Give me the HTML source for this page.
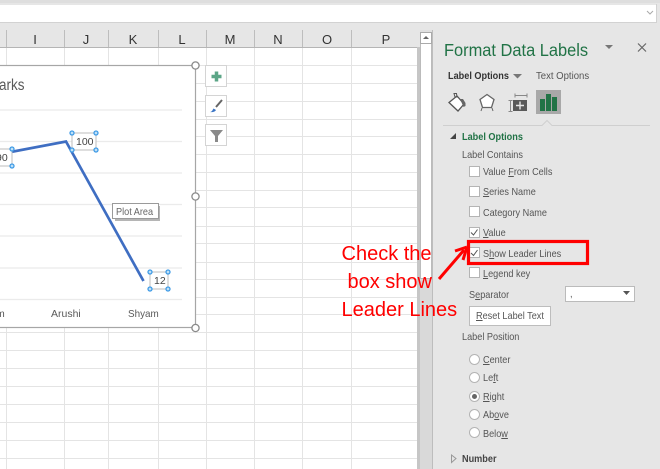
<!DOCTYPE html>
<html>
<head>
<meta charset="utf-8">
<style>
html,body{margin:0;padding:0;width:660px;height:469px;overflow:hidden;background:#fff}
body{position:relative;font-family:"Liberation Sans",sans-serif;color:#444}
.a{position:absolute}
.t{position:absolute;white-space:nowrap;font-size:10.5px;color:#555;line-height:12px;transform:scaleX(.87);transform-origin:left center}
.n{transform:none}
.cb{position:absolute;left:469px;width:9px;height:9px;background:#fff;border:1px solid #b4b4b4}
.rb{position:absolute;left:469px;width:9px;height:9px;background:#fff;border:1px solid #b4b4b4;border-radius:50%}
.col{position:absolute;top:33px;font-size:13px;color:#333;line-height:14px;transform:translateX(-50%)}
.s{position:absolute;width:20px;height:20px;left:205px;background:#fff;border:1px solid #d4d4d4;box-sizing:content-box}
.r{position:absolute;color:#f00;font-size:20px;line-height:24px;white-space:nowrap;z-index:5}
u{text-decoration-thickness:1px;text-underline-offset:1px}
</style>
</head>
<body>
<!-- base sheet -->
<svg class="a" style="left:0;top:0" width="660" height="469">
<rect width="660" height="469" fill="#fff"/>
<g stroke="#e4e4e4" stroke-width="1">
<path d="M0 65.5H418M0 83.5H418M0 101.5H418M0 119.5H418M0 136.5H418M0 154.5H418M0 172.5H418M0 190.5H418M0 207.5H418M0 226.5H418M0 243.5H418M0 262.5H418M0 279.5H418M0 297.5H418M0 314.5H418M0 332.5H418M0 350.5H418M0 368.5H418M0 386.5H418M0 404.5H418M0 422.5H418M0 440.5H418M0 458.5H418"/>
<path d="M6.5 48V469M64.5 48V469M108.5 48V469M158.5 48V469M206.5 48V469M254.5 48V469M302.5 48V469M351.5 48V469"/>
</g>
<!-- top chrome -->
<rect x="0" y="0" width="660" height="48" fill="#e6e6e6"/>
<rect x="0" y="0" width="660" height="3" fill="#dedede"/>
<rect x="0" y="47" width="418" height="1" fill="#b5b5b5"/>
<path d="M6.5 30V47M64.5 30V47M108.5 30V47M158.5 30V47M206.5 30V47M254.5 30V47M302.5 30V47M351.5 30V47" stroke="#bdbdbd"/>
<!-- sheet right edge & scrollbar -->
<rect x="417" y="47" width="3" height="422" fill="#c6c6c6"/>
<rect x="420" y="30" width="13" height="439" fill="#e0e0e0"/>
<rect x="420.500" y="32.500" width="11" height="246" fill="#fff" stroke="#bbb"/>
<rect x="420.500" y="32.500" width="11" height="11" fill="#fff" stroke="#aaa"/>
<path d="M423 39h6l-3-3z" fill="#666"/>
<rect x="420" y="279" width="13" height="190" fill="#d9d9d9"/>
<!-- panel -->
<rect x="433" y="23" width="227" height="446" fill="#e6e6e6"/>
<rect x="0" y="5" width="656" height="17" fill="#fff"/>
<path d="M0 22.500H657M656.500 4V23" stroke="#d2d2d2"/>
<path d="M647 11l3 3 3-3" fill="none" stroke="#aaa"/>
<rect x="432" y="30" width="1" height="439" fill="#bdbdbd"/>
<!-- chart -->
<rect x="-2.500" y="65.500" width="198" height="262" fill="#fff" stroke="#a6a6a6" stroke-width="1.200"/>
<path d="M0 110H182M0 141.500H182M0 173H182M0 204.500H182M0 236H182M0 268H182M0 299.500H182" stroke="#ebebeb" stroke-width="1.200"/>
<path d="M0 154L66 141.500L143.500 281" fill="none" stroke="#3f6ec2" stroke-width="2.700"/>
<!-- chart handles -->
<circle cx="195.500" cy="65.500" r="3.600" fill="#fff" stroke="#8a8a8a" stroke-width="1.300"/>
<circle cx="195.500" cy="196.500" r="3.600" fill="#fff" stroke="#8a8a8a" stroke-width="1.300"/>
<circle cx="195.500" cy="328" r="3.600" fill="#fff" stroke="#8a8a8a" stroke-width="1.300"/>
<!-- label boxes -->
<g fill="#fff" stroke="#bcbcbc">
<rect x="72" y="133" width="24" height="17"/>
<rect x="150" y="272" width="18" height="17"/>
<rect x="-4" y="149" width="16" height="17"/>
</g>
<g fill="#bfe0f7" stroke="#3f9be6" stroke-width="1.300">
<circle cx="72" cy="133" r="2"/><circle cx="96" cy="133" r="2"/><circle cx="72" cy="150" r="2"/><circle cx="96" cy="150" r="2"/>
<circle cx="150" cy="272" r="2"/><circle cx="168" cy="272" r="2"/><circle cx="150" cy="289" r="2"/><circle cx="168" cy="289" r="2"/>
<circle cx="12" cy="149" r="2"/><circle cx="12" cy="166" r="2"/>
</g>
<!-- tooltip -->
<rect x="115" y="206" width="45" height="15" fill="#b5b5b5"/>
<rect x="112.500" y="203.500" width="46" height="15" fill="#fff" stroke="#9a9a9a"/>
<!-- panel tab separator -->
<path d="M443 125.500H542L547 120.500L552 125.500H650" fill="none" stroke="#cfcfcf"/>
</svg>

<!-- col headers -->
<div class="col" style="left:35px">I</div>
<div class="col" style="left:86px">J</div>
<div class="col" style="left:133px">K</div>
<div class="col" style="left:182px">L</div>
<div class="col" style="left:230px">M</div>
<div class="col" style="left:278px">N</div>
<div class="col" style="left:327px">O</div>
<div class="col" style="left:386px">P</div>

<!-- chart text -->
<div class="t" style="left:-1px;top:77px;font-size:15.500px;line-height:18px;color:#595959">arks</div>
<div class="t n" style="left:76px;top:136px;font-size:10.500px;color:#444">100</div>
<div class="t n" style="left:154px;top:275px;font-size:10.500px;color:#444">12</div>
<div class="t n" style="left:-4px;top:152px;font-size:10.500px;color:#444">90</div>
<div class="t n" style="left:-4px;top:308px;color:#595959">m</div>
<div class="t n" style="left:51px;top:308px;font-size:10.500px;color:#595959">Arushi</div>
<div class="t" style="left:128px;top:308px;font-size:10.500px;color:#595959;transform:scaleX(.94)">Shyam</div>
<div class="t" style="left:115.500px;top:205.500px;font-size:10.500px;color:#666">Plot Area</div>

<!-- side buttons -->
<div class="s" style="top:65px"><svg width="20" height="20"><path d="M10.500 5.500v10M5.500 10.500h10" stroke="#5ca687" stroke-width="3.500"/></svg></div>
<div class="s" style="top:95px"><svg width="20" height="20"><path d="M10 11L16 4" stroke="#666" stroke-width="2"/><path d="M4 16c2 0 2.500-2 3.500-3.500L10 14c-1 2-4 2.500-6 2z" fill="#3a74c4"/></svg></div>
<div class="s" style="top:124px"><svg width="20" height="20"><path d="M4 5h13l-5 6v6h-3v-6z" fill="#8a8a8a"/></svg></div>

<!-- Panel header -->
<div class="t" style="left:443.500px;top:39.500px;font-size:17.200px;line-height:20px;color:#217346;transform:scaleX(.955)">Format Data Labels</div>
<svg class="a" style="left:600px;top:40px" width="50" height="16"><path d="M5 5h8l-4 4z" fill="#777"/><path d="M38 3.500l8 8M46 3.500l-8 8" stroke="#666" stroke-width="1.200"/></svg>
<div class="t" style="left:447.500px;top:69.500px;font-weight:bold;color:#333">Label Options</div>
<svg class="a" style="left:511px;top:70px" width="14" height="12"><path d="M2 4h9l-4.500 4.500z" fill="#777"/></svg>
<div class="t" style="left:535.500px;top:69.500px;color:#555;transform:scaleX(.91)">Text Options</div>

<!-- tab icons -->
<svg class="a" style="left:445px;top:90px" width="120" height="30">
<path d="M4 12.500L12 6l7 8-6 7z" fill="#fff" stroke="#555" stroke-width="1.300"/>
<path d="M10 7L9 3.500h2.500L12 7z" fill="none" stroke="#555"/>
<path d="M15 9h3l2.500 4v3l-2 1z" fill="#666"/>
<path d="M42 4.500l7 5-2.500 8h-9l-2.500-8z" fill="#fff" stroke="#666" stroke-width="1.300"/>
<path d="M37 18l-1 3M47 18l1 3" stroke="#666"/>
<path d="M65.500 10.500v11M63.500 10.500h4M63.500 21.500h4" stroke="#888" fill="none"/>
<path d="M70 5.500h12M70 3.500v4M82 3.500v4" stroke="#888" fill="none"/>
<rect x="68" y="10" width="14" height="11" fill="#595959"/>
<path d="M75 11.500v8M71 15.500h8" stroke="#e6e6e6" stroke-width="1.400"/>
<rect x="91" y="0" width="25" height="24" fill="#a8a8a8"/>
<rect x="95" y="9" width="5" height="12" fill="#217346"/><rect x="101" y="4" width="5" height="17" fill="#217346"/><rect x="107" y="7" width="5" height="14" fill="#217346"/>
</svg>

<!-- Label options -->
<svg class="a" style="left:449px;top:132px" width="10" height="10"><path d="M1 7h6V1z" fill="#444"/></svg>
<div class="t" style="left:461.500px;top:131px;font-weight:bold;color:#217346">Label Options</div>
<div class="t" style="left:461.500px;top:148.500px">Label Contains</div>

<div class="cb" style="top:166px"></div><div class="t" style="left:483px;top:165.500px">Value <u>F</u>rom Cells</div>
<div class="cb" style="top:186px"></div><div class="t" style="left:483px;top:186px"><u>S</u>eries Name</div>
<div class="cb" style="top:206px"></div><div class="t" style="left:483px;top:206.500px">Cate<u>g</u>ory Name</div>
<div class="cb" style="top:227px"></div><div class="t" style="left:483px;top:227px"><u>V</u>alue</div>
<div class="cb" style="top:247px"></div><div class="t" style="left:483px;top:247.500px">S<u>h</u>ow Leader Lines</div>
<div class="cb" style="top:267px"></div><div class="t" style="left:483px;top:268px"><u>L</u>egend key</div>
<svg class="a" style="left:469px;top:227px;z-index:2" width="11" height="32"><path d="M2 5.500l2.500 2.500L8.500 2.500M2 26l2.500 2.500L8.500 23" fill="none" stroke="#555" stroke-width="1"/></svg>

<div class="t" style="left:469px;top:288.500px">S<u>e</u>parator</div>
<div class="a" style="left:565px;top:286px;width:68px;height:14px;background:#fff;border:1px solid #bbb"></div>
<div class="t" style="left:570px;top:288px">,</div>
<svg class="a" style="left:622px;top:289px" width="10" height="8"><path d="M1 2h7L4.500 6z" fill="#555"/></svg>
<div class="a" style="left:469px;top:306px;width:80px;height:18px;background:#fff;border:1px solid #bdbdbd"></div>
<div class="t" style="left:476px;top:310px"><u>R</u>eset Label Text</div>
<div class="t" style="left:461.500px;top:331px">Label Position</div>

<div class="rb" style="top:354px"></div><div class="t" style="left:483px;top:354px"><u>C</u>enter</div>
<div class="rb" style="top:372px"></div><div class="t" style="left:483px;top:372px">Le<u>f</u>t</div>
<div class="rb" style="top:391px"></div><div class="t" style="left:483px;top:391px"><u>R</u>ight</div>
<div class="a" style="left:472px;top:394px;width:5px;height:5px;border-radius:50%;background:#666"></div>
<div class="rb" style="top:409px"></div><div class="t" style="left:483px;top:409px">Ab<u>o</u>ve</div>
<div class="rb" style="top:427px"></div><div class="t" style="left:483px;top:427.500px">Belo<u>w</u></div>

<svg class="a" style="left:450px;top:454px" width="10" height="12"><path d="M1.500 1L6 4.500L1.500 8.500z" fill="none" stroke="#999"/></svg>
<div class="t" style="left:461.500px;top:453px;font-weight:bold;color:#444">Number</div>

<!-- annotation -->
<div class="r" style="left:341.500px;top:242px">Check the</div>
<div class="r" style="left:347.500px;top:270px">box show</div>
<div class="r" style="left:341.500px;top:298px">Leader Lines</div>
<svg class="a" style="left:430px;top:235px;z-index:6" width="165" height="50">
<rect x="38.500" y="6.500" width="119" height="22" fill="none" stroke="#f00" stroke-width="3.200"/>
<path d="M9 44L34 15" stroke="#f00" stroke-width="3"/>
<path d="M37 12L25 16M37 12L33 25" stroke="#f00" stroke-width="3" fill="none"/>
</svg>
</body>
</html>
